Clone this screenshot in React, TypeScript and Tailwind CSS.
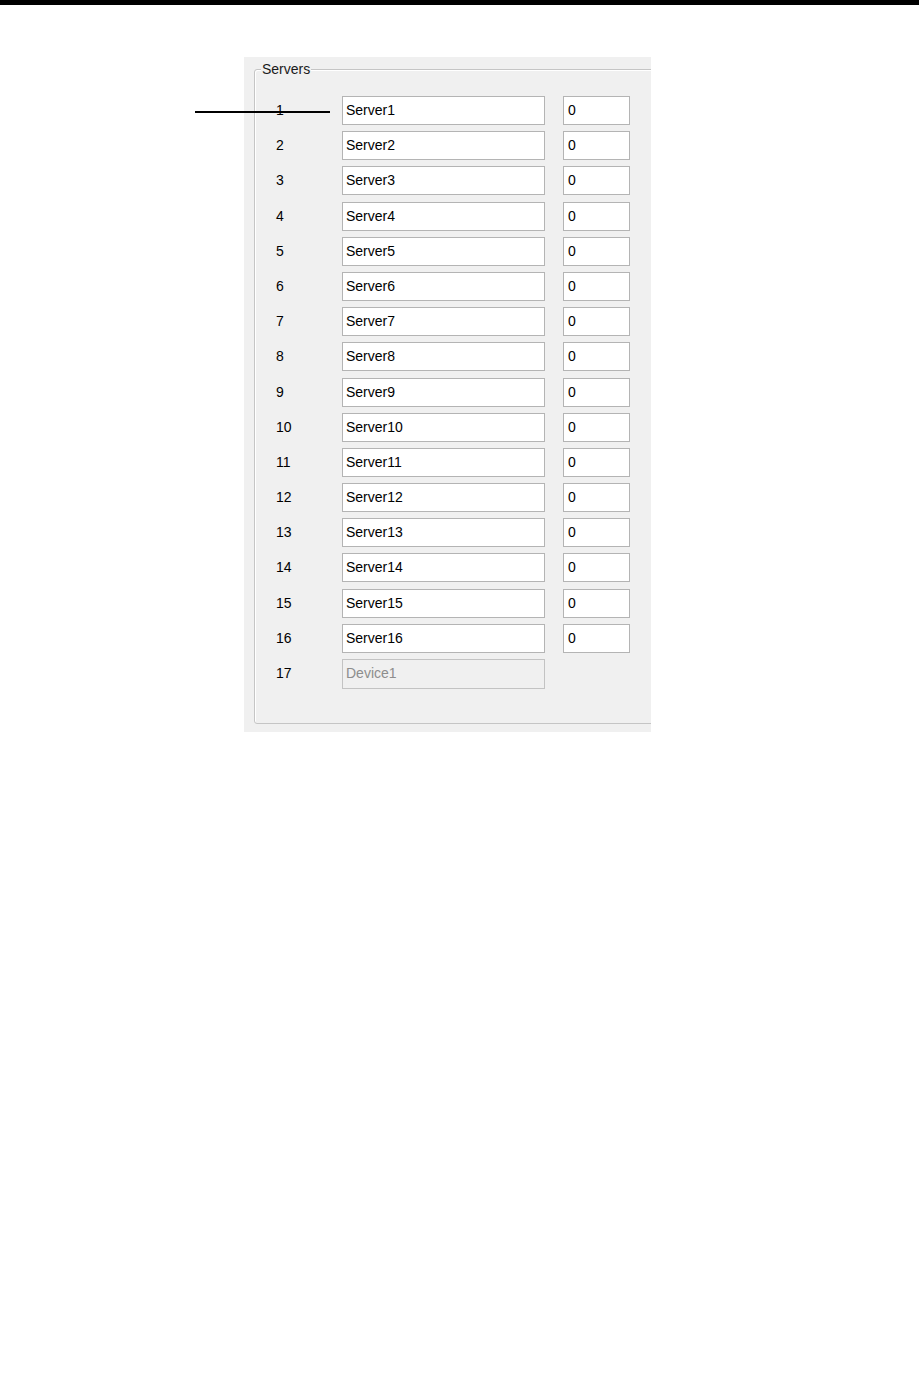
const rows = Array.from({ length: 16 }, (_, i) => i + 1)

const App = () => {
  return (
    <div className="relative min-h-[1387px] w-[919px] bg-white font-['Liberation_Sans',Arial,sans-serif] text-[14px] text-black">
      <div className="h-[5px] w-full bg-black" />
      <div className="ml-[244px] mt-[52px] h-[675px] w-[407px] overflow-hidden bg-[#f0f0f0] pt-[12px] pl-[10px]">
        <div className="relative h-[655px] w-[420px] rounded-[3px] border border-[#c5c5c5] shadow-[inset_1px_1px_0_#ffffff]">
          <span className="absolute -top-[9px] left-[6px] bg-[#f0f0f0] px-[1px] leading-[16px] text-[#1a1a1a]">
            Servers
          </span>
          <div className="flex flex-col gap-[6.2px] pl-[20px] pt-[26px]">
            {rows.map((n) => (
              <div className="flex h-[29px] items-center" key={n}>
                <div className="w-[67px] pl-[1px]">{n}</div>
                <div className="flex h-[29px] w-[203px] items-center border border-[#b4b4b4] bg-white pl-[3px]">
                  Server{n}
                </div>
                <div className="ml-[18px] flex h-[29px] w-[67px] items-center border border-[#b4b4b4] bg-white pl-[4px]">
                  0
                </div>
              </div>
            ))}
            <div className="flex h-[29px] items-center">
              <div className="w-[67px] pl-[1px]">17</div>
              <div className="flex h-[30px] w-[203px] items-center border border-[#c3c3c3] bg-[#f0f0f0] pl-[3px] text-[#8d8d8d]">
                Device1
              </div>
            </div>
          </div>
        </div>
      </div>
      <div className="absolute left-[195px] top-[111px] h-[1.5px] w-[135px] bg-black" />
    </div>
  )
}

export default App
